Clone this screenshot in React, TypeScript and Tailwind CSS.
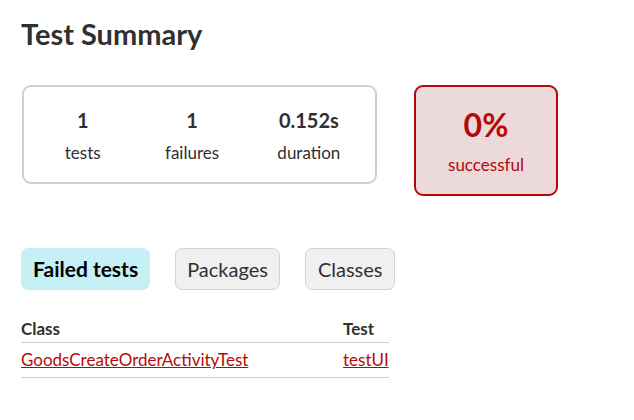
export default function App() {
  return (
    <div className="min-h-[420px] bg-white px-[21px] pt-[14px] text-[#303030] [font-family:Lato,'Liberation_Sans',sans-serif]">
      <h1 className="text-[29px] font-bold leading-[40px]">Test Summary</h1>

      <div className="mt-[31px] flex items-start gap-[37px] pl-[1px]">
        <div className="flex h-[99px] w-[355px] rounded-[9px] border-2 border-[#d0d0d0] px-[4px] pt-[20px]">
          <div className="flex w-[110px] flex-col items-center">
            <div className="text-[20px] font-bold leading-[26px]">1</div>
            <div className="mt-[9px] text-[17px] leading-[22px]">tests</div>
          </div>
          <div className="flex w-[110px] flex-col items-center">
            <div className="text-[20px] font-bold leading-[26px]">1</div>
            <div className="mt-[9px] text-[17px] leading-[22px]">failures</div>
          </div>
          <div className="flex w-[125px] flex-col items-center">
            <div className="text-[20px] font-bold leading-[26px]">0.152s</div>
            <div className="mt-[9px] text-[17px] leading-[22px]">duration</div>
          </div>
        </div>

        <div className="flex h-[111px] w-[144px] flex-col items-center rounded-[9px] border-2 border-[#b60808] bg-[#ecdada] pt-[19px] text-[#b60808]">
          <div className="text-[32px] font-bold leading-[38px]">0%</div>
          <div className="mt-[10px] text-[17px] leading-[22px]">successful</div>
        </div>
      </div>

      <div className="mt-[52px] flex gap-[25px]">
        <div className="flex h-[42px] items-center rounded-[7px] border border-[#c5f0f5] bg-[#c5f0f5] px-[11px] text-[21px] font-bold text-black">
          Failed tests
        </div>
        <div className="flex h-[42px] items-center rounded-[7px] border border-[#d4d4d4] bg-[#f0f0f0] px-[11px] text-[20px]">
          Packages
        </div>
        <div className="flex h-[42px] items-center rounded-[7px] border border-[#d4d4d4] bg-[#f0f0f0] px-[12px] text-[20px]">
          Classes
        </div>
      </div>

      <div className="mt-[25px] w-[368px] text-[17px]">
        <div className="flex h-[28px] items-center border-b border-[#d0d0d0] font-bold">
          <div className="w-[322px]">Class</div>
          <div>Test</div>
        </div>
        <div className="flex h-[35px] items-center border-b border-[#d0d0d0] text-[#b60808]">
          <div className="w-[322px]">
            <a href="#" className="underline">GoodsCreateOrderActivityTest</a>
          </div>
          <div>
            <a href="#" className="underline">testUI</a>
          </div>
        </div>
      </div>
    </div>
  );
}
